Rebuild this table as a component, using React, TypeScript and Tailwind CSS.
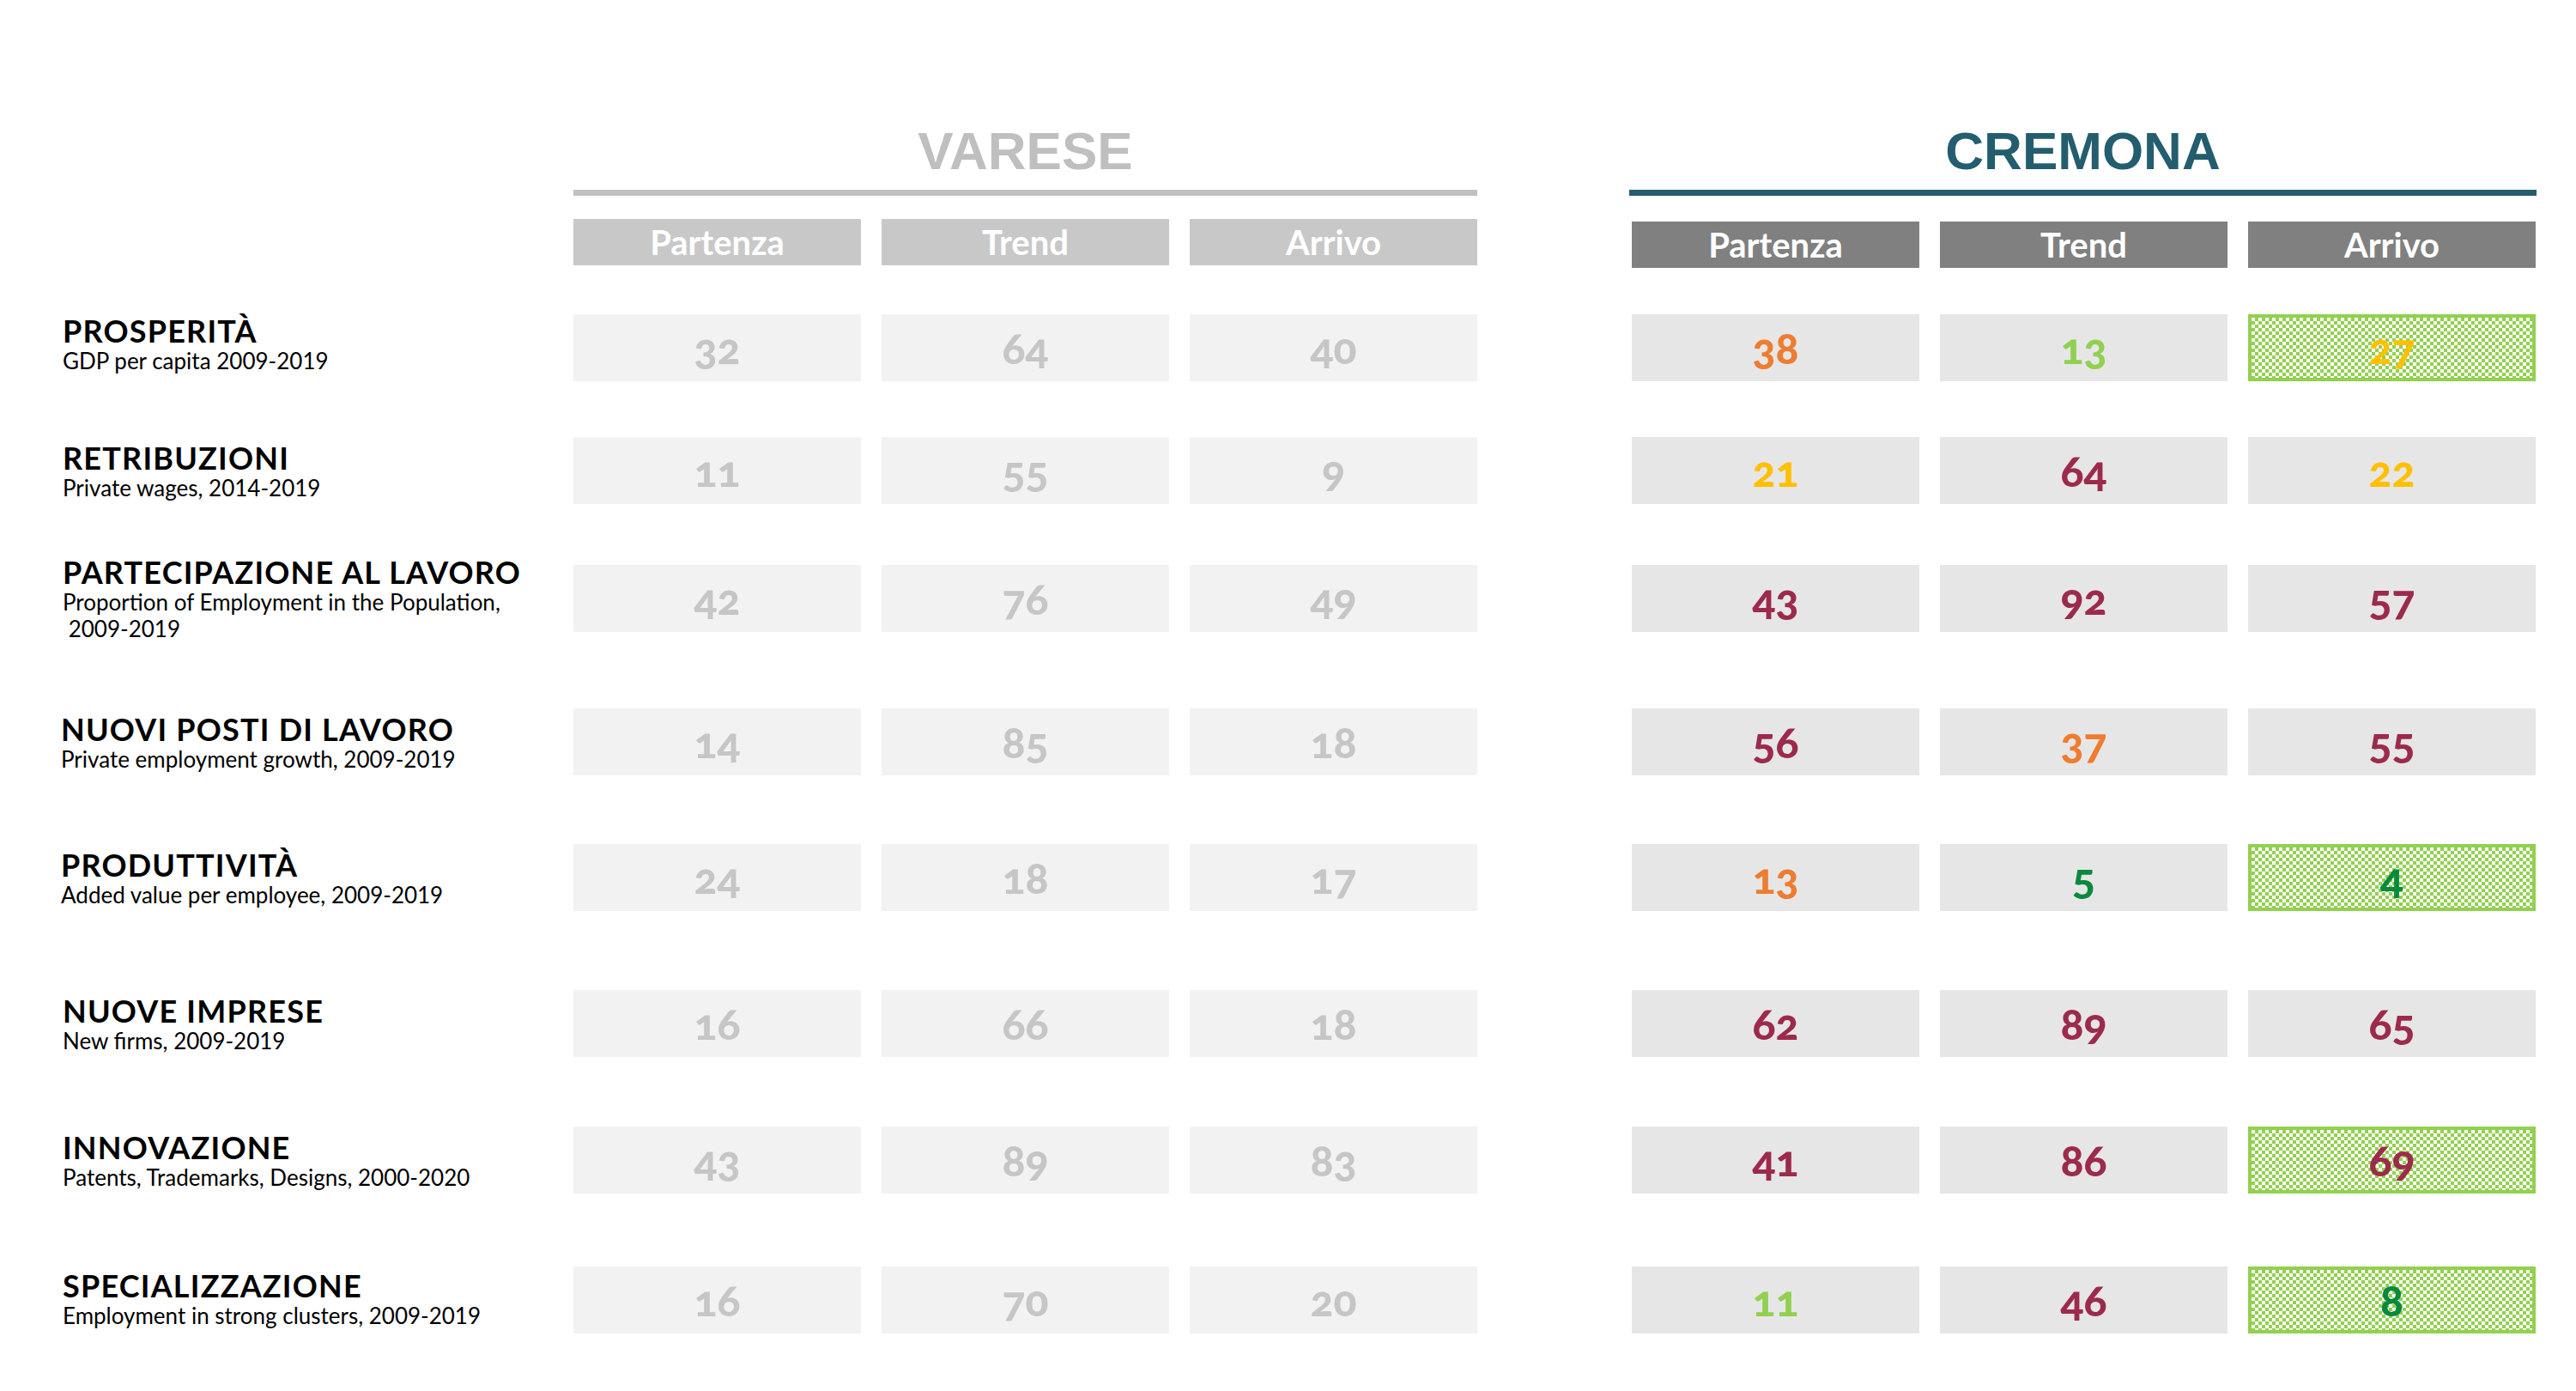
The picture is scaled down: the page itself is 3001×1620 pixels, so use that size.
const labelFont = "font-['Lato','Liberation_Sans',sans-serif]"

type Cell = { v: number; c: string; hl?: boolean }

const MAROON = "text-[#9c2b4b]"
const ORANGE = "text-[#ee7d31]"
const YELLOW = "text-[#ffc000]"
const LIME = "text-[#92d050]"
const GREEN = "text-[#078a3d]"

const rows: {
  mt: string
  title: string
  sub: string[]
  indent?: string
  nudge?: string
  varese: number[]
  cremona: Cell[]
}[] = [
  {
    mt: "mt-[54px]",
    title: "PROSPERITÀ",
    sub: ["GDP per capita 2009-2019"],
    nudge: "pb-[10px]",
    varese: [32, 64, 40],
    cremona: [
      { v: 38, c: ORANGE },
      { v: 13, c: LIME },
      { v: 27, c: YELLOW, hl: true },
    ],
  },
  {
    mt: "mt-[65px]",
    title: "RETRIBUZIONI",
    sub: ["Private wages, 2014-2019"],
    varese: [11, 55, 9],
    cremona: [
      { v: 21, c: YELLOW },
      { v: 64, c: MAROON },
      { v: 22, c: YELLOW },
    ],
  },
  {
    mt: "mt-[71px]",
    title: "PARTECIPAZIONE AL LAVORO",
    sub: ["Proportion of Employment in the Population,", "\u00a02009-2019"],
    varese: [42, 76, 49],
    cremona: [
      { v: 43, c: MAROON },
      { v: 92, c: MAROON },
      { v: 57, c: MAROON },
    ],
  },
  {
    mt: "mt-[89px]",
    title: "NUOVI POSTI DI LAVORO",
    sub: ["Private employment growth, 2009-2019"],
    indent: "pl-[71px]",
    varese: [14, 85, 18],
    cremona: [
      { v: 56, c: MAROON },
      { v: 37, c: ORANGE },
      { v: 55, c: MAROON },
    ],
  },
  {
    mt: "mt-[80px]",
    title: "PRODUTTIVITÀ",
    sub: ["Added value per employee, 2009-2019"],
    indent: "pl-[71px]",
    varese: [24, 18, 17],
    cremona: [
      { v: 13, c: ORANGE },
      { v: 5, c: GREEN },
      { v: 4, c: GREEN, hl: true },
    ],
  },
  {
    mt: "mt-[92px]",
    title: "NUOVE IMPRESE",
    sub: ["New firms, 2009-2019"],
    varese: [16, 66, 18],
    cremona: [
      { v: 62, c: MAROON },
      { v: 89, c: MAROON },
      { v: 65, c: MAROON },
    ],
  },
  {
    mt: "mt-[81px]",
    title: "INNOVAZIONE",
    sub: ["Patents, Trademarks, Designs, 2000-2020"],
    varese: [43, 89, 83],
    cremona: [
      { v: 41, c: MAROON },
      { v: 86, c: MAROON },
      { v: 69, c: MAROON, hl: true },
    ],
  },
  {
    mt: "mt-[85px]",
    title: "SPECIALIZZAZIONE",
    sub: ["Employment in strong clusters, 2009-2019"],
    nudge: "pb-[4px]",
    varese: [16, 70, 20],
    cremona: [
      { v: 11, c: LIME },
      { v: 46, c: MAROON },
      { v: 8, c: GREEN, hl: true },
    ],
  },
]

const cols = ["Partenza", "Trend", "Arrivo"]

function Num({ v, color }: { v: number; color: string }) {
  return (
    <span className={`${labelFont} oldstyle-nums text-[50px] leading-none font-black ${color}`}>
      {v}
    </span>
  )
}

export default function App() {
  return (
    <div className="relative h-[1620px] w-[3001px] overflow-hidden bg-white">
      {/* region titles */}
      <div className="flex pt-[145px] pl-[668px]">
        <div className="w-[1053px]">
          <div className="text-center font-['Liberation_Sans',Arial,sans-serif] text-[62px] leading-none font-bold text-[#bfbfbf]">
            VARESE
          </div>
          <div className="mt-[14px] h-[7px] bg-[#c0c0c0]" />
          <div className="mt-[27px] grid grid-cols-3 gap-x-[24px]">
            {cols.map((c) => (
              <div
                key={c}
                className={`${labelFont} flex h-[54px] items-center justify-center bg-[#c8c8c8] text-[40px] font-bold text-white`}
              >
                {c}
              </div>
            ))}
          </div>
        </div>
        <div className="ml-[177px] w-[1057px]">
          <div className="text-center font-['Liberation_Sans',Arial,sans-serif] text-[62px] leading-none font-bold text-[#235d6e]">
            CREMONA
          </div>
          <div className="mt-[14px] h-[7px] bg-[#235d6e]" />
          <div className="mt-[30px] ml-[3px] grid w-[1053px] grid-cols-3 gap-x-[24px]">
            {cols.map((c) => (
              <div
                key={c}
                className={`${labelFont} flex h-[54px] items-center justify-center bg-[#808080] text-[40px] font-bold text-white`}
              >
                {c}
              </div>
            ))}
          </div>
        </div>
      </div>

      {/* data rows */}
      <div className="flex flex-col">
        {rows.map((r) => (
          <div key={r.title} className={`flex h-[78px] items-center ${r.mt}`}>
            <div
              className={`${labelFont} w-[668px] shrink-0 text-black ${r.indent ?? "pl-[73px]"} ${r.nudge ?? ""}`}
            >
              <div className="text-[36px] leading-[40px] font-bold tracking-[1.2px]">{r.title}</div>
              {r.sub.map((s) => (
                <div key={s} className="text-[26px] leading-[31px]">
                  {s}
                </div>
              ))}
            </div>
            <div className="grid h-full w-[1053px] shrink-0 grid-cols-3 gap-x-[24px]">
              {r.varese.map((v, j) => (
                <div key={j} className="flex items-center justify-center bg-[#f3f2f3]">
                  <Num v={v} color="text-[#c6c6c6]" />
                </div>
              ))}
            </div>
            <div className="ml-[180px] grid h-full w-[1053px] shrink-0 grid-cols-3 gap-x-[24px]">
              {r.cremona.map((c, j) =>
                c.hl ? (
                  <div
                    key={j}
                    className="flex items-center justify-center border-[4px] border-[#92d050] bg-[conic-gradient(#92d050_90deg,#ffffff_90deg_180deg,#92d050_180deg_270deg,#ffffff_270deg)] bg-size-[8px_8px]"
                  >
                    <Num v={c.v} color={c.c} />
                  </div>
                ) : (
                  <div key={j} className="flex items-center justify-center bg-[#e7e6e7]">
                    <Num v={c.v} color={c.c} />
                  </div>
                ),
              )}
            </div>
          </div>
        ))}
      </div>
    </div>
  )
}
